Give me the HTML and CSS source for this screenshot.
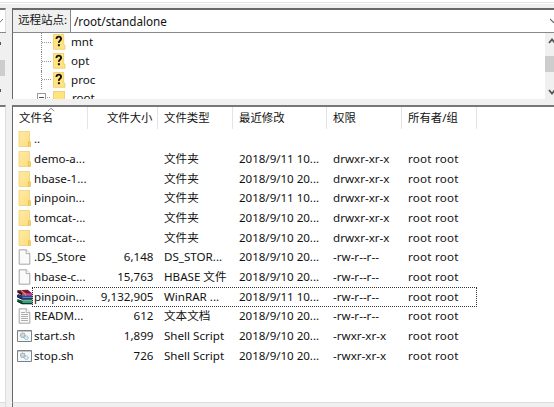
FILE: index.html
```
<!DOCTYPE html>
<html lang="zh-CN">
<head>
<meta charset="utf-8">
<title>远程站点</title>
<link rel="stylesheet" href="styles.css">
</head>
<body>
<svg class="defs" aria-hidden="true">
  <defs>
    <linearGradient id="fold" x2="1" y2="1"><stop stop-color="#ffeaa6"/><stop offset="1" stop-color="#fddd7c"/></linearGradient>
    <symbol id="folder" viewBox="0 0 16 16"><path d="M2 .5h10.5v10.7l.8.3v4H2z" fill="url(#fold)" stroke="#efcf74" stroke-width=".8"/><path d="M11.5 15.2v-4.5h1.8v4.5z" fill="#ffdc70" stroke="#e3b644" stroke-width=".7"/></symbol>
    <symbol id="file" viewBox="0 0 16 16"><path d="M2.2.8h7l3.6 3.6v10.8H2.2z" fill="#fafafa" stroke="#8e8e8e" stroke-width=".8"/><path d="M9.2.8v3.8h3.6" fill="#fff" stroke="#8e8e8e" stroke-width=".7"/></symbol>
    <symbol id="text" viewBox="0 0 16 16"><use href="#file"/><path d="M4 4.5h4M4 6.5h7M4 8.5h7M4 10.5h7M4 12.5h7" stroke="#999" stroke-width=".8"/></symbol>
    <symbol id="script" viewBox="0 0 16 16"><path d="M.5 2.5h14v11H.5z" fill="#f7f8f9" stroke="#7b8288"/><path d="M1 3.5h13" stroke="#c2c6c9"/><circle cx="5.7" cy="7.2" r="2.2" fill="#d4dbe0" stroke="#929da5" stroke-width="1.1" stroke-dasharray="1.2 .5"/><circle cx="9.3" cy="9.8" r="1.9" fill="#d9effb" stroke="#84b1c9" stroke-width="1" stroke-dasharray="1 .4"/></symbol>
    <symbol id="rar" viewBox="0 0 16 16">
      <path d="M.3 1.2 10.8.8l4.4 3.8v1H5z" fill="#7d1344"/><path d="M5 4.3h10.3v2H5z" fill="#dc3a9e"/><path d="M.3 1.2v2.4L5 6.6V4.3z" fill="#35101f"/>
      <path d="M0 5.4 5 7.2h10.3v3H4.7L0 7.8z" fill="#1f3584"/><path d="M5.5 7.9h9.8v1.4H5.5z" fill="#3f8fd8"/><path d="M0 7.8 5 10.2h10.3M1 5.6 5 6.9h10.3" stroke="#151a33" fill="none"/>
      <path d="M.3 10 5 11.4h10.3v3.6H5L.3 12.4z" fill="#07543d"/><path d="M5.5 12.2h9.8v1.6H5.5z" fill="#36c07f"/><path d="M.3 12.4 5 14.8h10.3" stroke="#112b24" fill="none"/>
      <path d="M4 1.4 8.6 5v1.4" stroke="#c9a13c" stroke-width="1.3" fill="none"/>
    </symbol>
    <symbol id="unknown" viewBox="0 0 13 16"><path d="M.5.5h10.2v10.2l1.3.6v4H.5z" fill="#ffe47e" stroke="#edca64" stroke-width=".8"/><path d="M3.5 5V4.1Q3.8 2.6 5.8 2.6T8.1 4.6Q8.1 5.9 6.9 6.8T5.9 8.9" fill="none" stroke="#111" stroke-width="1.9"/><path d="M4.9 10.2h2v2h-2z" fill="#111"/></symbol>
    <symbol id="up" viewBox="0 0 8 6"><path d="m1 5 3-3.5L7 5" fill="none" stroke="#555" stroke-width="1.8"/></symbol>
    <symbol id="down" viewBox="0 0 8 6"><path d="m1 1 3 3.5L7 1" fill="none" stroke="#555" stroke-width="1.8"/></symbol>
  </defs>
</svg>
<div class="window">
  <div class="topline"></div>
  <div class="panes">
    <div class="side">
      <div class="side-address"><svg viewBox="0 0 5 6"><path d="M-2 1 0 4.2 3 1" fill="none" stroke="#777"/></svg></div>
      <div class="side-scroll"><i class="nub"></i><div class="side-thumb"></div><i class="nub low"></i></div>
      <div class="side-gap"></div>
      <div class="side-list"></div>
      <div class="side-status"></div>
    </div>
    <main class="remote">
      <div class="address">
        <label class="label">远程站点:</label><span class="path">/root/standalone</span>
        <svg class="chev" viewBox="0 0 4 6"><path d="m0 1 3.5 3.5L7 1" fill="none" stroke="#666" stroke-width="1.1"/></svg>
      </div>
      <div class="tree">
        <div class="nodes">
          <div class="node"><i class="branch"></i><svg><use href="#unknown"/></svg><span>mnt</span></div>
          <div class="node"><i class="branch"></i><svg><use href="#unknown"/></svg><span>opt</span></div>
          <div class="node"><i class="branch"></i><svg><use href="#unknown"/></svg><span>proc</span></div>
          <div class="node last"><i class="plus"></i><i class="dots"></i><i class="plain"></i><span>root</span></div>
        </div>
        <div class="scroll"><svg><use href="#up"/></svg><div class="thumb"></div><svg><use href="#down"/></svg></div>
      </div>
      <div class="splitter"></div>
      <div class="list">
        <div class="grid head"><span>文件名<svg class="sort" viewBox="0 0 8 5"><path d="m.8 4.2 3.2-3 3.2 3" fill="none" stroke="#888"/></svg></span><span class="num">文件大小</span><span>文件类型</span><span>最近修改</span><span>权限</span><span>所有者/组</span></div>
        <div class="rows">
          <div class="grid row"><span class="name"><svg><use href="#folder"/></svg>..</span></div>
          <div class="grid row"><span class="name"><svg><use href="#folder"/></svg>demo-a...</span><span></span><span>文件夹</span><span class="date">2018/9/11 10...</span><span class="perm">drwxr-xr-x</span><span class="owner">root root</span></div>
          <div class="grid row"><span class="name"><svg><use href="#folder"/></svg>hbase-1...</span><span></span><span>文件夹</span><span class="date">2018/9/10 20...</span><span class="perm">drwxr-xr-x</span><span class="owner">root root</span></div>
          <div class="grid row"><span class="name"><svg><use href="#folder"/></svg>pinpoin...</span><span></span><span>文件夹</span><span class="date">2018/9/11 10...</span><span class="perm">drwxr-xr-x</span><span class="owner">root root</span></div>
          <div class="grid row"><span class="name"><svg><use href="#folder"/></svg>tomcat-...</span><span></span><span>文件夹</span><span class="date">2018/9/10 20...</span><span class="perm">drwxr-xr-x</span><span class="owner">root root</span></div>
          <div class="grid row"><span class="name"><svg><use href="#folder"/></svg>tomcat-...</span><span></span><span>文件夹</span><span class="date">2018/9/10 20...</span><span class="perm">drwxr-xr-x</span><span class="owner">root root</span></div>
          <div class="grid row"><span class="name"><svg><use href="#file"/></svg>.DS_Store</span><span class="num">6,148</span><span>DS_STOR...</span><span class="date">2018/9/10 20...</span><span class="perm">-rw-r--r--</span><span class="owner">root root</span></div>
          <div class="grid row"><span class="name"><svg><use href="#file"/></svg>hbase-c...</span><span class="num">15,763</span><span>HBASE 文件</span><span class="date">2018/9/10 20...</span><span class="perm">-rw-r--r--</span><span class="owner">root root</span></div>
          <div class="grid row focused"><span class="name"><svg><use href="#rar"/></svg>pinpoin...</span><span class="num">9,132,905</span><span>WinRAR ...</span><span class="date">2018/9/11 10...</span><span class="perm">-rw-r--r--</span><span class="owner">root root</span></div>
          <div class="grid row"><span class="name"><svg><use href="#text"/></svg>READM...</span><span class="num">612</span><span>文本文档</span><span class="date">2018/9/10 20...</span><span class="perm">-rw-r--r--</span><span class="owner">root root</span></div>
          <div class="grid row"><span class="name"><svg><use href="#script"/></svg>start.sh</span><span class="num">1,899</span><span>Shell Script</span><span class="date">2018/9/10 20...</span><span class="perm">-rwxr-xr-x</span><span class="owner">root root</span></div>
          <div class="grid row"><span class="name"><svg><use href="#script"/></svg>stop.sh</span><span class="num">726</span><span>Shell Script</span><span class="date">2018/9/10 20...</span><span class="perm">-rwxr-xr-x</span><span class="owner">root root</span></div>
        </div>
      </div>
      <div class="status"></div>
    </main>
  </div>
</div>
</body>
</html>
```
FILE: styles.css
```
* { box-sizing: border-box; }
body { margin: 0; overflow: hidden; background: #f0f0f0; color: #111; font: 11.6px/16px "Noto Sans", "Noto Sans CJK SC", sans-serif; }
svg { display: block; flex: none; }
.defs { position: absolute; width: 0; height: 0; }
.window { width: 554px; height: 407px; display: flex; flex-direction: column; }
.topline { height: 8px; flex: none; background: linear-gradient(#fff 0 2px, #e4e4e4 2px 3px, #fff 3px 4px, #f0f0f0 4px); }
.panes { flex: 1; display: grid; grid-template-columns: 6px 542px; column-gap: 6px; min-height: 0; }
.side { display: flex; flex-direction: column; }
.side-address { height: 24px; border-top: 2px solid #777; border-right: 1px solid #ddd; background: #fff; padding-top: 8px; }
.side-address svg { width: 5px; height: 6px; }
.side-scroll { height: 68px; border-top: 1px solid #888; background: #f0f0f0; padding-top: 9px; }
.nub { display: block; width: 1px; height: 3px; background: #555; }
.side-thumb { width: 5px; height: 16px; margin-top: 15px; background: #cdcdcd; }
.low { margin-top: 13px; }
.side-gap { height: 5px; }
.side-list { height: 297px; border-top: 2px solid #777; border-right: 1px solid #ddd; background: #fff; }
.side-status { flex: 1; border-top: 1px solid #dcdcdc; border-right: 1px solid #ddd; }
.remote { display: flex; flex-direction: column; }
.address { height: 25px; border: 0 solid #696969; border-top: 2px solid #696969; border-left: 1px solid #696969; border-bottom: 1px solid #888; display: flex; align-items: center; background: #fff; }
.label { width: 58px; height: 22px; padding: 2px 0 0 5px; border-right: 1px solid #888; background: #f0f0f0; letter-spacing: -.1px; white-space: nowrap; }
.path { padding-left: 3px; flex: 1; font-size: 11.7px; }
.chev { width: 4px; height: 6px; }
.tree { height: 66px; display: flex; border-left: 1px solid #696969; background: #fff; overflow: hidden; }
.nodes { flex: 1; }
.node { height: 18.8px; display: flex; align-items: center; }
.node svg { width: 13px; height: 16px; }
.node span { padding-left: 5px; }
.branch { width: 12px; height: 100%; margin-left: 28px; border-left: 1px dotted #888; background: repeating-linear-gradient(90deg, #999 0 1px, transparent 1px 2px) 0 50% / 10px 1px no-repeat; }
.last { height: 17px; }
.plus { height: 9px; width: 9px; margin-left: 24px; border: 1px solid #999; background: linear-gradient(#456, #456) center / 5px 1px no-repeat; }
.dots { width: 5px; height: 1px; margin-right: 2px; background: repeating-linear-gradient(90deg, transparent 0 1px, #999 1px 2px); }
.plain { width: 12px; height: 14px; background: #ffe47e; border: 1px solid #efd177; }
.node .plain + span { padding-left: 7px; }
.scroll { width: 9px; background: #f0f0f0; display: flex; flex-direction: column; padding-top: 5px; }
.scroll svg { width: 8px; height: 6px; margin-left: 3px; }
.thumb { height: 16px; margin: 12px 0 17px; background: #cdcdcd; }
.splitter { height: 6px; background: #f0f0f0; }
.list { height: 297px; border-top: 2px solid #777; border-left: 1px solid #696969; background: #fff; }
.grid { display: grid; grid-template-columns: 75px 70px 75px 94px 75px 75px; width: 464px; }
.grid > span { padding-left: 6px; white-space: nowrap; }
.grid > .num { padding: 0 4.5px 0 0; text-align: right; }
.head { height: 22px; line-height: 21px; font-size: 11.4px; }
.head > span { position: relative; border-right: 1px solid #e4e4e4; }
.sort { position: absolute; top: 0; left: 34px; width: 8px; height: 5px; }
.rows { padding-top: .6px; }
.row { position: relative; height: 19.68px; align-items: center; }
.row > .name { display: flex; align-items: center; padding-left: 4px; }
.name svg { width: 16px; height: 16px; margin-right: 1px; }
.date { letter-spacing: -.04px; }
.grid > .owner { letter-spacing: .25px; }
.focused::after { content: ""; position: absolute; left: 19px; right: 0; top: 0; bottom: 0; border: 1px dotted #333; }
.status { flex: 1; background: #f0f0f0; border-top: 1px solid #dcdcdc; border-left: 1px solid #696969; }
```
